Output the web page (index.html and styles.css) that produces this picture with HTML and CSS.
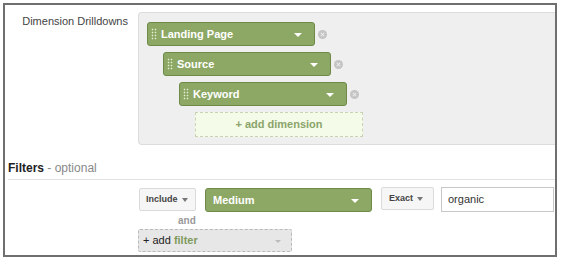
FILE: index.html
```html
<!DOCTYPE html>
<html lang="en">
<head>
  <meta charset="UTF-8">
  <title>Custom Report</title>
  <link rel="stylesheet" href="styles.css">
</head>
<body>
  <div id="frame">

    <div class="field">
      <div class="label">Dimension Drilldowns</div>
      <div id="panel">
        <div class="drill">
          <div class="dim"><span class="grip"></span>Landing Page<span class="caret"></span></div>
          <span class="remove"></span>
        </div>
        <div class="drill step1">
          <div class="dim"><span class="grip"></span>Source<span class="caret"></span></div>
          <span class="remove"></span>
        </div>
        <div class="drill step2">
          <div class="dim"><span class="grip"></span>Keyword<span class="caret"></span></div>
          <span class="remove"></span>
        </div>
        <div class="add-dim">+ add dimension</div>
      </div>
    </div>

    <div id="filters-head"><b>Filters</b> - optional</div>

    <div id="filter-row">
      <div class="select small">Include<span class="caret dark"></span></div>
      <div class="dim medium">Medium<span class="caret"></span></div>
      <div class="select small exact">Exact<span class="caret dark"></span></div>
      <div class="input">organic</div>
    </div>
    <div class="and">and</div>
    <div class="add-filter">+ add <span>filter</span><span class="caret light"></span></div>

  </div>
</body>
</html>
```

FILE: styles.css
```css
*{
  box-sizing: border-box;
}

body{
  margin: 0;
  background: #fff;
  font-family: "Liberation Sans", Arial, sans-serif;
  color: #333;
}

#frame{
  width: 554px;
  height: 254px;
  margin: 3px;
  border: 2px solid #6f6f6f;
  overflow: hidden;
}

.field{
  display: flex;
  margin-top: 7px;
}

.label{
  width: 123px;
  margin-right: 10px;
  padding-top: 3px;
  text-align: right;
  font-size: 11px;
  color: #444;
}

#panel{
  flex: 1;
  height: 133px;
  padding: 9px 0 0 8px;
  background: #efefef;
  border: 1px solid #dcdcdc;
  border-right: none;
  border-radius: 4px 0 0 4px;
}

.drill{
  display: flex;
  align-items: center;
  margin-bottom: 6px;
}

.drill.step1{
  margin-left: 16px;
}

.drill.step2{
  margin-left: 32px;
}

.dim{
  position: relative;
  width: 168px;
  height: 24px;
  padding-left: 13px;
  line-height: 22px;
  font-size: 11px;
  font-weight: bold;
  color: #fff;
  background: #8da865;
  border: 1px solid #6d8a48;
  border-radius: 3px;
}

.grip{
  position: absolute;
  left: 3px;
  top: 5px;
  width: 6px;
  height: 12px;
  background-image: radial-gradient(circle, #e4eed4 0.7px, transparent 1.1px);
  background-size: 3px 3px;
}

.caret{
  position: absolute;
  right: 12px;
  top: 10px;
  width: 0;
  height: 0;
  border-left: 4px solid transparent;
  border-right: 4px solid transparent;
  border-top: 4px solid #fff;
}

.caret.dark{
  right: 7px;
  top: 9px;
  border-left-width: 3px;
  border-right-width: 3px;
  border-top: 4px solid #777;
}

.caret.light{
  right: 10px;
  top: 10px;
  border-left-width: 3px;
  border-right-width: 3px;
  border-top: 3px solid #bbb;
}

.remove{
  position: relative;
  width: 9px;
  height: 9px;
  margin-left: 3px;
  border-radius: 50%;
  background: #c4c4c4;
}

.remove::before,
.remove::after{
  content: '';
  position: absolute;
  left: 4px;
  top: 2px;
  width: 1px;
  height: 5px;
  background: #efefef;
  transform: rotate(45deg);
}

.remove::after{
  transform: rotate(-45deg);
}

.add-dim{
  width: 168px;
  height: 25px;
  margin-left: 48px;
  line-height: 23px;
  text-align: center;
  font-size: 11px;
  font-weight: bold;
  color: #8ba46b;
  background: #f4fbe8;
  border: 1px dashed #c9d3b3;
}

#filters-head{
  margin: 16px 0 0 3px;
  padding-bottom: 4px;
  font-size: 12px;
  color: #888;
  border-bottom: 1px solid #e2e2e2;
}

#filters-head b{
  color: #222;
}

#filter-row{
  display: flex;
  align-items: flex-start;
  margin: 8px 0 0 134px;
}

.select{
  position: relative;
  height: 23px;
  padding-left: 6px;
  line-height: 21px;
  font-size: 9px;
  font-weight: bold;
  color: #444;
  background: #f6f6f6;
  border: 1px solid #dadada;
  border-radius: 2px;
}

.small{
  width: 57px;
}

.dim.medium{
  width: 167px;
  margin-left: 9px;
  padding-left: 7px;
}

.select.exact{
  width: 53px;
  margin: -1px 0 0 9px;
  padding-left: 7px;
}

.select.exact .caret.dark{
  right: 10px;
}

.input{
  width: 113px;
  height: 25px;
  margin: -1px 0 0 7px;
  padding-left: 6px;
  line-height: 23px;
  font-size: 11px;
  color: #333;
  border: 1px solid #c7c7c7;
}

.and{
  margin: 3px 0 0 173px;
  font-size: 10px;
  font-weight: bold;
  color: #9a9a9a;
}

.add-filter{
  position: relative;
  width: 154px;
  height: 23px;
  margin: 3px 0 0 133px;
  padding-left: 4px;
  line-height: 21px;
  font-size: 11px;
  color: #222;
  background: #e7e7e7;
  border: 1px dashed #b9b9b9;
  border-radius: 2px;
}

.add-filter span{
  font-weight: bold;
  color: #7f9a5d;
}
```
